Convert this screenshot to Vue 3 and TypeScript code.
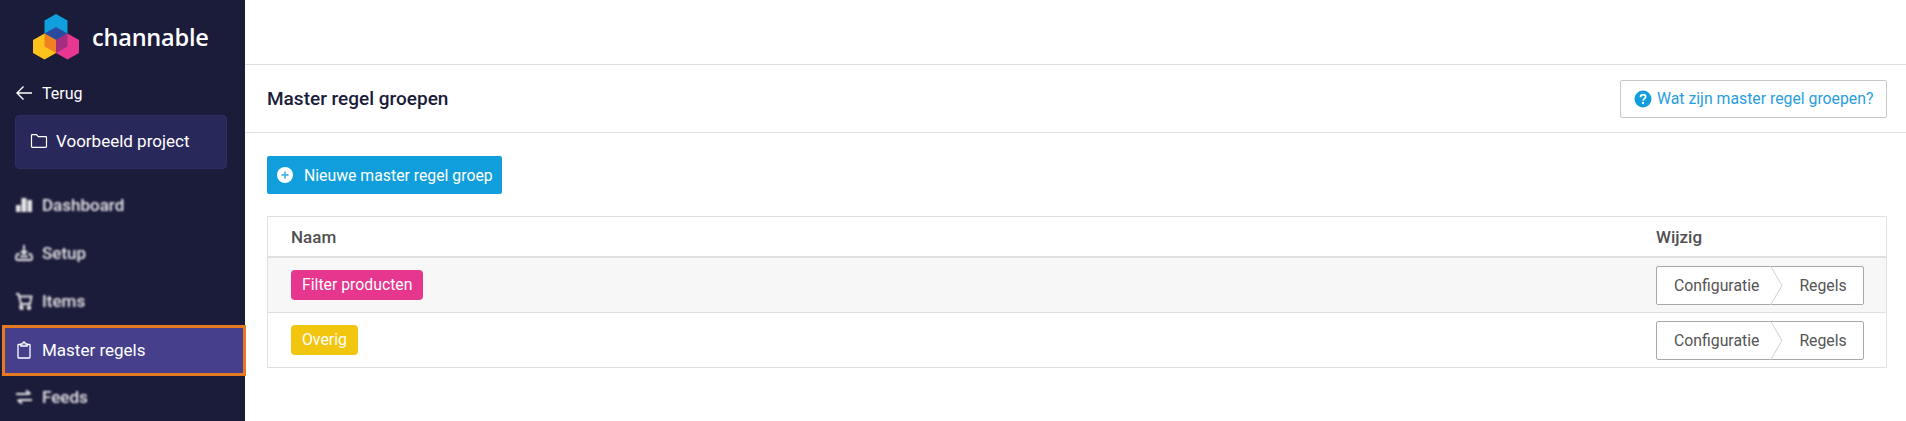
<template>
  <div class="page">
    <aside class="sidebar">
      <div class="brand">
        <svg class="brand-mark" width="46" height="46" viewBox="0 0 46 46">
          <polygon points="23,0 34.5,6.5 34.5,19.5 23,26 11.5,19.5 11.5,6.5" fill="#109fdc" />
          <polygon points="11.5,19.5 23,26 23,39 11.5,45.5 0,39 0,26" fill="#fdc31c" />
          <polygon points="34.5,19.5 46,26 46,39 34.5,45.5 23,39 23,26" fill="#e73792" />
          <polygon points="23,13 34.5,19.5 23,26 11.5,19.5" fill="#2a4a9e" />
          <polygon points="11.5,19.5 23,26 23,39 11.5,32.5" fill="#f08020" />
          <polygon points="34.5,19.5 34.5,32.5 23,39 23,26" fill="#a62c80" />
        </svg>
        <span class="brand-name">channable</span>
      </div>

      <a class="back">
        <svg class="nav-icon" width="18" height="18" viewBox="0 0 18 18" fill="none" stroke="currentColor" stroke-width="1.4">
          <path d="M17 9H2M8.500 2.500 2 9l6.500 6.500" />
        </svg>
        Terug
      </a>

      <div class="project">
        <svg width="18" height="18" viewBox="0 0 18 18" fill="none" stroke="currentColor" stroke-width="1.2">
          <path d="M1.500 14.500v-11q0-.8.8-.8h4.200l1.800 2h7.400q.8 0 .8.8v9q0 .8-.8.800H2.300q-.8 0-.8-.8z" />
        </svg>
        Voorbeeld project
      </div>

      <nav class="nav">
        <a v-for="item in navItems" :key="item.label" class="nav-item" :class="{ active: item.active }">
          <span class="nav-body">
            <svg class="nav-icon" width="18" height="18" viewBox="0 0 18 18" fill="none" stroke="currentColor" stroke-width="1.500" v-html="item.icon"></svg>
            {{ item.label }}
          </span>
        </a>
      </nav>
    </aside>

    <main class="main">
      <div class="topbar"></div>

      <header class="page-head">
        <h1>Master regel groepen</h1>
        <button class="help-btn">
          <svg width="18" height="18" viewBox="0 0 18 18">
            <circle cx="9" cy="9" r="8.500" fill="#109fdc" />
            <path d="M6.500 7.200Q6.600 4.700 9.100 4.700 11.600 4.800 11.600 6.800 11.600 8 10.300 8.800 9.200 9.500 9.200 10.700" fill="none" stroke="#fff" stroke-width="1.800" />
            <circle cx="9.100" cy="13" r="1.150" fill="#fff" />
          </svg>
          Wat zijn master regel groepen?
        </button>
      </header>

      <section class="content">
        <button class="add-btn">
          <svg width="16" height="16" viewBox="0 0 16 16">
            <circle cx="8" cy="8" r="8" fill="#fff" />
            <path d="M8 4.500v7M4.500 8h7" stroke="#55b8e6" stroke-width="1.800" />
          </svg>
          Nieuwe master regel groep
        </button>

        <div class="table">
          <div class="row head">
            <span>Naam</span>
            <span class="edit-col">Wijzig</span>
          </div>
          <div v-for="(group, i) in groups" :key="group.name" class="row" :class="{ striped: i % 2 === 0 }">
            <span class="tag" :style="{ background: group.color }">{{ group.name }}</span>
            <div class="edit-col">
              <div class="steps">
                <span>Configuratie</span>
                <svg class="chevron" width="13" height="39" viewBox="0 0 13 39" fill="none" stroke="#cfcfcf" stroke-width="1">
                  <path d="M0.500 0 12 19.500 0.500 39" />
                </svg>
                <span>Regels</span>
              </div>
            </div>
          </div>
        </div>
      </section>
    </main>
  </div>
</template>

<script setup lang="ts">
interface NavItem {
  label: string
  icon: string
  active?: boolean
}

interface Group {
  name: string
  color: string
}

const navItems: NavItem[] = [
  {
    label: 'Dashboard',
    icon: '<path d="M1 16V9h4.500v7zM6.500 16V2h5v14zM12.500 16V4H17v12z" fill="currentColor" stroke="none"/>'
  },
  {
    label: 'Setup',
    icon: '<path d="M9 1v9M6 7l3 3 3-3M4.500 10H3Q1 10.500 1 14.500 1 16 2.500 16h13q1.500 0 1.500-1.500 0-4-2-4.500h-1.500M5 12.500h8" stroke-width="1.900"/>'
  },
  {
    label: 'Items',
    icon: '<path d="M1 2h2.500L6 12h9l1.500-7.500H4M6 12l-1 2.500" stroke-width="1.900"/><circle cx="6.500" cy="15.800" r="1.500" fill="currentColor"/><circle cx="14" cy="15.800" r="1.500" fill="currentColor"/>'
  },
  {
    label: 'Master regels',
    active: true,
    icon: '<path d="M5.500 3.500H3.800q-.8 0-.8.8v12q0 .7.800.7h10.400q.8 0 .8-.7v-12q0-.8-.8-.8H12.500M6 5V2.800h1.800Q8 1 9 1t1.200 1.800H12V5z" stroke-width="1.300"/>'
  },
  {
    label: 'Feeds',
    icon: '<path d="M1 6h13M11 2.500 15.500 6 M17 12H4M7 15.500 2.500 12" stroke-width="2.200"/>'
  }
]

const groups: Group[] = [
  { name: 'Filter producten', color: '#e7368e' },
  { name: 'Overig', color: '#f2c60f' }
]
</script>

<style>
body {
  background: #fff;
  overflow: hidden;
}
</style>

<style scoped>
.page {
  display: flex;
  height: 421px;
  overflow: hidden;
  font-family: Roboto, "Liberation Sans", sans-serif;
  font-size: 14px;
}

.sidebar {
  flex: 0 0 245px;
  background: #1b1b3a;
  color: #fff;
  display: flex;
  flex-direction: column;
  padding-top: 14px;
  box-sizing: border-box;
}

.brand {
  display: flex;
  align-items: center;
  gap: 13px;
  padding-left: 33px;
  height: 46px;
}

.brand-name {
  font-family: "Open Sans", sans-serif;
  font-size: 23.500px;
  font-weight: 600;
  letter-spacing: -0.2px;
}

.back {
  display: flex;
  align-items: center;
  gap: 9px;
  margin-top: 22px;
  padding-left: 15px;
  height: 22px;
  font-size: 16px;
}

.project {
  display: flex;
  align-items: center;
  gap: 8px;
  margin: 11px 18px 0 15px;
  padding: 0 0 2px 14px;
  height: 54px;
  background: #29285a;
  border: 1px solid #2f2e62;
  border-radius: 4px;
  box-sizing: border-box;
  font-size: 17px;
}

.nav {
  display: flex;
  flex-direction: column;
  margin-top: 12px;
}

.nav-item {
  display: flex;
  align-items: center;
  height: 48px;
  padding-left: 15px;
  font-size: 17px;
  flex: none;
  box-sizing: border-box;
}

.nav-body {
  display: flex;
  align-items: center;
  gap: 9px;
  filter: blur(1.3px);
  opacity: 0.9;
  font-weight: 500;
}

.nav-item.active {
  height: 51px;
  margin: 0 -1px -3px 2px;
  padding-left: 13px;
  padding-bottom: 2px;
  background: #463f8c;
  border: 3px solid #e67a22;
}

.nav-item.active .nav-body {
  filter: none;
  opacity: 1;
  margin-left: -3px;
  font-weight: 400;
}

.main {
  flex: 1;
  min-width: 0;
  display: flex;
  flex-direction: column;
  color: #333;
}

.topbar {
  height: 64px;
  border-bottom: 1px solid #e0e0e0;
  flex: none;
}

.page-head {
  display: flex;
  align-items: center;
  justify-content: space-between;
  height: 67px;
  padding: 0 19px 0 22px;
  border-bottom: 1px solid #e0e0e0;
  flex: none;
}

.page-head h1 {
  margin: 0;
  font-size: 19px;
  font-weight: 500;
  color: #1b1b3a;
}

.help-btn {
  display: flex;
  align-items: center;
  gap: 5px;
  width: 267px;
  height: 38px;
  padding: 0 0 0 13px;
  background: #fff;
  border: 1px solid #c8c8c8;
  border-radius: 2px;
  color: #2a9de0;
  font: 400 15.800px Roboto, sans-serif;
}

.content {
  padding: 23px 19px 0 22px;
}

.add-btn {
  display: flex;
  align-items: center;
  gap: 11px;
  height: 38px;
  padding: 0 9px 0 10px;
  background: #109fdc;
  border: none;
  border-radius: 2px;
  color: #fff;
  font: 400 15.800px Roboto, sans-serif;
}

.table {
  margin-top: 22px;
  border: 1px solid #e0e0e0;
}

.row {
  display: flex;
  align-items: center;
  justify-content: space-between;
  height: 54px;
  padding-left: 23px;
  border-top: 1px solid #e0e0e0;
  box-sizing: content-box;
}

.row.head {
  height: 39px;
  border-top: none;
  border-bottom: 1px solid #e0e0e0;
  font-size: 17px;
  font-weight: 500;
  color: #505050;
}

.row.head + .row {
  border-top-width: 1px;
}

.row.striped {
  background: #f7f7f7;
}

.edit-col {
  width: 230px;
  flex: none;
}

.tag {
  padding: 6px 11px;
  border-radius: 4px;
  color: #fff;
  font-size: 15.800px;
  line-height: 18px;
}

.steps {
  display: flex;
  align-items: center;
  width: 208px;
  height: 39px;
  box-sizing: border-box;
  background: #fff;
  border: 1px solid #a8a8a8;
  border-radius: 2px;
  padding-left: 17px;
  font-size: 15.800px;
  color: #555;
}

.chevron {
  flex: none;
  margin: 0 16px 0 11px;
}
</style>
